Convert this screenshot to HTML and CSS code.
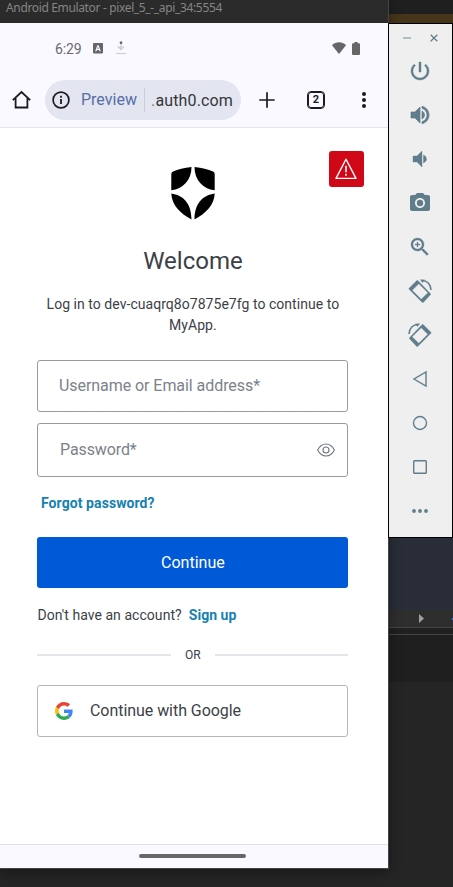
FILE: index.html
```html
<!DOCTYPE html>
<html lang="en">
<head>
<meta charset="utf-8">
<title>Android Emulator</title>
<link rel="stylesheet" href="styles.css">
</head>
<body>
<div class="desktop">
  <section class="window">
    <header class="titlebar"><span>Android Emulator - pixel_5_-_api_34:5554</span></header>
    <div class="status">
      <span class="time">6:29</span>
      <svg class="st-app" width="10" height="11" viewBox="0 0 10 11"><rect width="10" height="10.5" rx="1" fill="#666"/><path d="M2.2 8.300 4.300 2.200h1.400L7.800 8.300H6.500L6.100 7H3.900L3.500 8.300Z" fill="#faf9ff"/><path d="M4.300 5.800h1.400L5 3.800Z" fill="#666"/></svg>
      <svg class="st-down" width="10" height="14" viewBox="0 0 10 14"><path d="M5 3v5M2.500 6.200 5 8.600l2.500-2.400Z" stroke="#d0d0d4" stroke-width="1.300" fill="#d0d0d4"/><path d="M5 .5v2.500" stroke="#666" stroke-width="2.400"/><path d="M0 12.500h10" stroke="#d0d0d4" stroke-width="1.200"/></svg>
      <span class="spacer"></span>
      <svg width="14" height="12" viewBox="0 0 14 12"><path d="M0 3.200C4-.6 10-.6 14 3.200L7 12Z" fill="#666"/></svg>
      <svg class="battery" width="8" height="13" viewBox="0 0 8 13"><path d="M2.400 0h3.200v1.200H7a1 1 0 0 1 1 1V12a1 1 0 0 1-1 1H1a1 1 0 0 1-1-1V2.200a1 1 0 0 1 1-1h1.400Z" fill="#666"/></svg>
    </div>
    <nav class="browser">
      <svg class="home" width="20" height="20" viewBox="0 0 20 20"><path d="M1.800 10.200 10.500 2.100l8.700 8.100M4.600 8.200v9.300h11.800V8.200" fill="none" stroke="#1b1b1f" stroke-width="1.800"/></svg>
      <div class="omnibox">
        <svg width="18" height="18" viewBox="0 0 18 18"><circle cx="9" cy="9" r="7.900" fill="none" stroke="#1b1b1f" stroke-width="1.700"/><path d="M9 8v5M9 4.800v1.900" stroke="#1b1b1f" stroke-width="1.800"/></svg>
        <span class="preview">Preview</span>
        <span class="url"><i>.</i>auth0.com</span>
      </div>
      <svg class="plus" width="16" height="16" viewBox="0 0 16 16"><path d="M8 .3v15.400M.3 8h15.400" stroke="#1b1b1f" stroke-width="1.700"/></svg>
      <span class="tabs">2</span>
      <svg class="more" width="6" height="16" viewBox="0 0 6 16"><g fill="#1b1b1f"><circle cx="3" cy="2" r="2"/><circle cx="3" cy="8" r="2"/><circle cx="3" cy="14" r="2"/></g></svg>
    </nav>
    <main class="page">
      <div class="alert"><svg width="22" height="22" viewBox="0 0 22 22"><path d="M11 1.200 21 20.400H1Z" fill="none" stroke="#fff" stroke-width="1.400" stroke-linejoin="round"/><path d="M11 7.800v6.400M11 15.800v1.900" stroke="#fff" stroke-width="1.600"/></svg></div>
      <svg class="logo" width="44" height="53" viewBox="0 0 44 53"><path d="M20.500 0C13 .6 7 2.400 2 4.600Q.3 5.400.3 7.300V23.300C12 22 20.500 13 20.500 0ZM23.500 0C31 .6 37 2.400 42 4.600Q43.700 5.400 43.700 7.300V23.300C32 22 23.500 13 23.500 0ZM.3 26.400C12 28 20.500 36 20.500 52.500 9 46 .8 38 .3 26.400ZM43.700 26.400C32 28 23.500 36 23.500 52.500 35 46 43.200 38 43.700 26.400Z" fill="#000"/></svg>
      <h1>Welcome</h1>
      <p class="intro">Log in to dev-cuaqrq8o7875e7fg to continue to<br>MyApp.</p>
      <div class="field user"><span>Username or Email address*</span></div>
      <div class="field pass"><span>Password*</span>
        <svg width="18" height="14" viewBox="0 0 18 14"><path d="M.6 7C2.600 3.200 5.500 1 9 1s6.400 2.200 8.400 6C15.400 10.800 12.500 13 9 13S2.600 10.800.6 7Z" fill="none" stroke="#6f7780" stroke-width="1.100"/><circle cx="9" cy="7" r="3" fill="none" stroke="#6f7780" stroke-width="1.100"/></svg>
      </div>
      <a class="forgot">Forgot password?</a>
      <div class="continue"><span>Continue</span></div>
      <p class="signup"><span>Don't have an account?</span><a>Sign up</a></p>
      <div class="or"><span>OR</span></div>
      <div class="google">
        <svg width="18" height="18" viewBox="0 0 48 48"><path fill="#ea4335" d="M24 9.500c3.500 0 6.700 1.200 9.200 3.600l6.900-6.900C35.900 2.400 30.500 0 24 0 14.600 0 6.500 5.400 2.600 13.200l8 6.200C12.400 13.700 17.700 9.500 24 9.500Z"/><path fill="#4285f4" d="M47 24.600c0-1.600-.2-3.100-.4-4.600H24v9h12.900c-.6 3-2.200 5.500-4.700 7.200l7.700 6C44.400 38 47 31.800 47 24.600Z"/><path fill="#fbbc05" d="M10.500 28.600c-.5-1.500-.8-3-.8-4.600s.3-3.100.8-4.600l-8-6.200C.9 16.500 0 20.100 0 24s.9 7.500 2.600 10.800Z"/><path fill="#34a853" d="M24 48c6.500 0 11.900-2.100 15.900-5.800l-7.700-6c-2.200 1.500-4.900 2.300-8.200 2.300-6.300 0-11.600-4.200-13.500-9.900l-8 6.200C6.500 42.600 14.600 48 24 48Z"/></svg>
        <span>Continue with Google</span>
      </div>
    </main>
    <footer class="gesture"><div></div></footer>
  </section>
  <aside class="side">
    <div class="brown"></div>
    <div class="toolbox">
      <div class="controls">
        <svg width="8" height="8" viewBox="0 0 8 8"><path d="M0 4h8" stroke="#a3b4bc" stroke-width="1.700"/></svg>
        <svg width="8" height="8" viewBox="0 0 8 8"><path d="m.7.700 6.600 6.600m0-6.600L.7 7.300" stroke="#607d8b" stroke-width="1.300"/></svg>
      </div>
      <div class="tool"><svg viewBox="0 0 24 24"><path d="M13 3h-2v10h2V3zm4.830 2.170-1.420 1.420C17.990 7.860 19 9.810 19 12c0 3.870-3.130 7-7 7s-7-3.130-7-7c0-2.190 1.010-4.140 2.580-5.420L6.170 5.170C4.230 6.820 3 9.260 3 12c0 4.970 4.030 9 9 9s9-4.030 9-9c0-2.740-1.230-5.180-3.170-6.830z" stroke="#607d8b" stroke-width=".4"/></svg></div>
      <div class="tool"><svg viewBox="0 0 24 24"><path d="M3 9v6h4l5 5V4L7 9H3zm13.500 3c0-1.770-1.020-3.290-2.500-4.030v8.050c1.480-.73 2.500-2.250 2.500-4.020zM14 3.230v2.060c2.890.86 5 3.540 5 6.710s-2.110 5.850-5 6.710v2.060c4.010-.91 7-4.490 7-8.770s-2.990-7.860-7-8.770z" stroke="#607d8b" stroke-width=".7"/></svg></div>
      <div class="tool"><svg viewBox="0 0 24 24"><path d="M5 9v6h4l5 5V4L9 9H5z" stroke="#607d8b" stroke-width=".4"/><path d="M18.500 12A4.500 4.500 0 0 0 15.500 7.970v8.050c1.480-.73 3-2.250 3-4.020z" stroke="#607d8b" stroke-width=".4"/></svg></div>
      <div class="tool"><svg viewBox="0 0 24 24"><circle cx="12" cy="12" r="3.200"/><path d="M9 2 7.170 4H4c-1.100 0-2 .9-2 2v12c0 1.100.9 2 2 2h16c1.100 0 2-.9 2-2V6c0-1.100-.9-2-2-2h-3.170L15 2H9zm3 15c-2.760 0-5-2.240-5-5s2.240-5 5-5 5 2.240 5 5-2.240 5-5 5z"/></svg></div>
      <div class="tool"><svg viewBox="0 0 24 24"><path d="M15.500 14h-.79l-.28-.27C15.410 12.590 16 11.110 16 9.500 16 5.910 13.090 3 9.500 3S3 5.910 3 9.500 5.910 16 9.500 16c1.610 0 3.090-.59 4.230-1.570l.27.28v.79l5 4.990L20.490 19l-4.990-5zm-6 0C7.010 14 5 11.990 5 9.500S7.010 5 9.500 5 14 7.010 14 9.500 11.990 14 9.500 14zm2.500-4h-2v2H9v-2H7V9h2V7h1v2h2v1z" stroke="#607d8b" stroke-width=".3"/></svg></div>
      <div class="tool"><svg viewBox="0 0 24 24"><path fill-rule="evenodd" d="M8.600 1.700 1.300 9a1 1 0 0 0 0 1.500L14 23.200a1 1 0 0 0 1.500 0l6.800-7.300a1 1 0 0 0 0-1.500L10.100 1.700a1 1 0 0 0-1.500 0ZM10.800 4.800 4.200 11.200 13.200 20.200 19.900 13.800Z" stroke="#607d8b" stroke-width=".3"/><path d="M13.500 1.500c5.500-.3 9.300 4 9.500 9.500" fill="none" stroke="#607d8b" stroke-width="1.500"/><path d="m12 .5 5 .2-2.500 3Z"/></svg></div>
      <div class="tool flip"><svg viewBox="0 0 24 24"><path fill-rule="evenodd" d="M8.600 1.700 1.300 9a1 1 0 0 0 0 1.500L14 23.200a1 1 0 0 0 1.500 0l6.800-7.300a1 1 0 0 0 0-1.500L10.100 1.700a1 1 0 0 0-1.500 0ZM10.800 4.800 4.200 11.200 13.200 20.200 19.900 13.800Z" stroke="#607d8b" stroke-width=".3"/><path d="M13.500 1.500c5.500-.3 9.300 4 9.500 9.500" fill="none" stroke="#607d8b" stroke-width="1.500"/><path d="m12 .5 5 .2-2.500 3Z"/></svg></div>
      <div class="tool line"><svg viewBox="0 0 22 22"><path d="M17 4v14L5 11Z"/></svg></div>
      <div class="tool line"><svg viewBox="0 0 22 22"><circle cx="11" cy="11" r="6.500"/></svg></div>
      <div class="tool line"><svg viewBox="0 0 22 22"><rect x="4.700" y="4.700" width="12.600" height="12.600" rx=".8"/></svg></div>
      <div class="tool"><svg viewBox="0 0 22 22"><circle cx="5" cy="11" r="1.900"/><circle cx="11" cy="11" r="1.900"/><circle cx="17" cy="11" r="1.900"/></svg></div>
    </div>
    <div class="editor"></div>
    <div class="scroll"><svg width="5" height="9" viewBox="0 0 5 9"><path d="M0 0v9l5-4.500Z" fill="#9f9f9f"/></svg><i></i></div>
    <div class="strip"></div>
    <div class="panel"></div>
  </aside>
</div>
</body>
</html>
```
FILE: styles.css
```css
* { box-sizing: border-box; }
body { margin: 0; background: #252525; font-family: Roboto, sans-serif; }
h1, p { margin: 0; font-weight: 400; }
svg { display: block; flex: none; }
span, a { white-space: nowrap; }
.desktop { display: flex; height: 887px; overflow: hidden; background: #252525; }
.window { width: 388px; height: 868px; flex: none; display: flex; flex-direction: column; background: #fff; box-shadow: 0 0 0 1px #444, 0 3px 12px rgba(0,0,0,.45); position: relative; z-index: 1; }
.titlebar { height: 23px; background: #2b2b2b; color: #858585; padding-left: 6px; font: 12px/16px "Noto Sans", sans-serif; }
.titlebar span { letter-spacing: -.35px; }
.status { height: 50px; background: #faf9ff; display: flex; align-items: center; padding: 0 28px 0 55px; }
.time { font-size: 14px; color: #6a6a6e; width: 38px; letter-spacing: -.1px; padding-top: 1px; }
.st-down { margin-left: 13px; }
.spacer { flex: 1; }
.battery { margin-left: 6px; }
.browser { height: 55px; background: #faf9ff; border-bottom: 1px solid #e6e6ee; display: flex; align-items: center; padding-left: 11px; }
.omnibox { width: 196px; height: 40px; margin-left: 14px; border-radius: 20px; background: #e3e6f0; display: flex; align-items: center; padding-left: 7px; }
.preview { margin-left: 11px; width: 64px; height: 24px; border-right: 1px solid #c9cddb; font-size: 16px; line-height: 24px; color: #566fa6; }
.url { margin-left: 6px; font-size: 16px; letter-spacing: .15px; color: #35363a; }
.url i { font-style: normal; color: #777; }
.plus { margin-left: 18px; }
.tabs { width: 18px; height: 18px; margin-left: 32px; border: 1.500px solid #1b1b1f; outline: .5px solid #1b1b1f; outline-offset: -2px; border-radius: 4px; font-size: 11px; line-height: 16px; font-weight: 700; text-align: center; color: #1b1b1f; }
.more { margin-left: 36px; }
.page { position: relative; flex: 1; padding: 39px 39.600px 0 37.400px; display: flex; flex-direction: column; }
.alert { position: absolute; left: 328.500px; top: 23px; width: 35.500px; height: 36px; border-radius: 3px; background: #d00716; display: flex; align-items: center; justify-content: center; }
.logo { margin-left: 133.600px; }
h1 { font-size: 24px; line-height: 30px; margin-top: 26px; text-align: center; color: #3c4148; }
.intro { margin-top: 18px; font-size: 14px; line-height: 21px; letter-spacing: .04px; text-align: center; color: #3c4148; }
.field { border: 1px solid #989a9d; border-radius: 3px; display: flex; align-items: center; justify-content: space-between; font-size: 16px; color: #7b828a; }
.user { height: 52px; margin-top: 24px; padding-left: 20.600px; }
.user span { letter-spacing: -.06px; margin-top: -1px; }
.pass { height: 54px; margin-top: 11px; padding: 0 12px 0 21.600px; }
.pass span { letter-spacing: -.1px; margin-top: -1px; }
.forgot { margin: 16px 0 0 3.600px; font-size: 14px; line-height: 21px; letter-spacing: .08px; font-weight: 700; color: #1681b2; }
.continue { height: 51px; margin-top: 23px; border-radius: 3px; background: #0059d6; color: #fff; font-size: 16px; display: flex; align-items: center; justify-content: center; }
.signup { margin-top: 17px; font-size: 14px; line-height: 21px; letter-spacing: .05px; color: #3c4148; display: flex; gap: 7px; }
.signup a { font-weight: 700; color: #1681b2; }
.or { display: flex; align-items: center; gap: 14px; height: 20px; margin-top: 19px; font-size: 12px; color: #3c4148; }
.or::before, .or::after { content: ""; flex: 1; height: 2px; background: #e5e6ea; }
.google { height: 52px; margin-top: 20px; border: 1px solid #b5b5b8; border-radius: 3px; display: flex; align-items: center; padding-left: 16.600px; gap: 17px; font-size: 16px; color: #3c4148; }
.google span { letter-spacing: -.05px; margin-top: -1px; }
.gesture { height: 24px; border-top: 1px solid #dfdfe6; background: #faf9ff; padding-top: 9px; }
.gesture div { width: 107px; height: 4px; margin-left: 139px; border-radius: 2px; background: #666; }
.side { width: 65px; flex: none; display: flex; flex-direction: column; }
.brown { height: 23px; border-top: 14px solid #1f1f1f; background: #453519; }
.toolbox { position: relative; z-index: 2; height: 515px; border: 1px solid #000; background: #efefef; }
.controls { height: 25px; display: flex; gap: 19px; padding: 10px 0 0 14px; }
.tool { height: 44px; padding-right: 1px; display: flex; align-items: center; justify-content: center; }
.tool svg { width: 24px; height: 24px; fill: #607d8b; }
.tool.line svg, .tool:last-child svg { width: 22px; height: 22px; }
.tool.line svg { fill: none; stroke: #607d8b; stroke-width: 1.400; }
.flip svg { transform: scaleX(-1); }
.editor { height: 72px; background: #282d37; }
.scroll { height: 17px; background: #2e2e2e; display: flex; align-items: center; padding-left: 31px; justify-content: space-between; }
.scroll i { width: 1px; height: 2px; background: #3574f0; }
.strip { height: 8px; border-top: 1px solid #454545; border-bottom: 1px solid #454545; background: #202020; }
.panel { height: 47px; background: #1f1f1f; }
```
